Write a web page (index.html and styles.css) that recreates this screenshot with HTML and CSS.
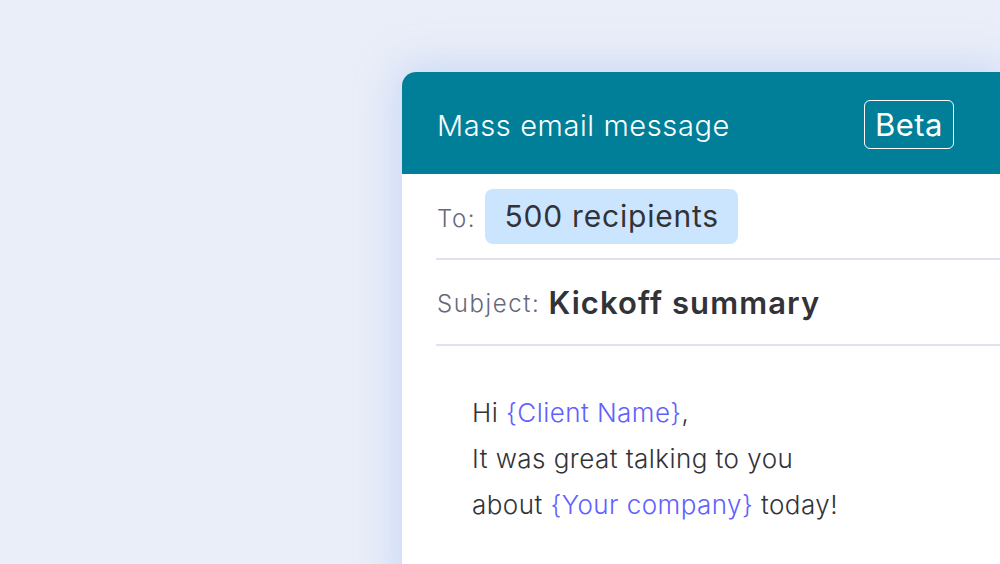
FILE: index.html
```html
<!DOCTYPE html>
<html>
<head>
<meta charset="utf-8">
<link rel="stylesheet" href="styles.css">
</head>
<body>
<div class="page">
  <div class="card">
    <div class="header">
      <span class="title">Mass email message</span>
      <span class="badge">Beta</span>
    </div>
    <div class="fields">
      <div class="row to-row">
        <span class="label">To:</span>
        <span class="chip">500 recipients</span>
      </div>
      <div class="row subject-row">
        <span class="label">Subject:</span>
        <span class="subject">Kickoff summary</span>
      </div>
    </div>
    <div class="body">
      <p>Hi <span class="ph">{Client Name}</span>,</p>
      <p>It was great talking to you</p>
      <p>about <span class="ph">{Your company}</span> today!</p>
    </div>
  </div>
</div>
</body>
</html>
```
FILE: styles.css
```css
html, body {
  margin: 0;
  padding: 0;
  height: 100%;
  overflow: hidden;
}
body {
  background: #eaeef8;
  font-family: "Inter", "Noto Sans", sans-serif;
  color: #323338;
}
.page {
  padding: 72px 0 0 402px;
  height: 564px;
  box-sizing: border-box;
  overflow: hidden;
}
.card {
  background: #ffffff;
  border-top-left-radius: 14px;
  height: 520px;
  overflow: hidden;
  box-shadow: 0 0 40px 6px rgba(190, 208, 245, 0.75);
}
.header {
  background: #017f99;
  height: 102px;
  display: flex;
  align-items: center;
  justify-content: space-between;
  padding: 0 46px 0 35px;
  color: #ffffff;
}
.title {
  font-size: 29px;
  font-weight: 300;
  letter-spacing: 0.6px;
  padding-top: 4px;
}
.badge {
  border: 1.5px solid #ffffff;
  border-radius: 6px;
  height: 49px;
  width: 90px;
  box-sizing: border-box;
  display: flex;
  align-items: center;
  justify-content: center;
  font-size: 31px;
  font-weight: 400;
  letter-spacing: 0.5px;
  margin-top: 3px;
}
.fields {
  padding-left: 34px;
}
.row {
  display: flex;
  align-items: center;
  border-bottom: 2px solid #dfe1ee;
}
.to-row {
  height: 84px;
}
.subject-row {
  height: 84px;
}
.label {
  font-size: 24px;
  font-weight: 300;
  color: #676879;
  padding-left: 1px;
  letter-spacing: 1.6px;
}
.chip {
  margin-left: 9px;
  background: #cce5ff;
  border-radius: 8px;
  height: 55px;
  width: 253px;
  box-sizing: border-box;
  display: flex;
  align-items: center;
  justify-content: center;
  font-size: 30px;
  font-weight: 400;
  color: #323338;
  letter-spacing: 0.8px;
}
.to-row .label {
  padding-top: 4px;
}
.subject {
  margin-left: 8px;
  font-size: 31px;
  font-weight: 600;
  color: #323338;
  letter-spacing: 1.1px;
}
.subject-row .label {
  padding-top: 2px;
}
.body {
  padding: 44px 0 0 70px;
}
.body p {
  margin: 0;
  font-size: 26px;
  font-weight: 300;
  line-height: 46px;
  color: #323338;
  letter-spacing: 0.45px;
}
.ph {
  color: #6161ff;
}
```
